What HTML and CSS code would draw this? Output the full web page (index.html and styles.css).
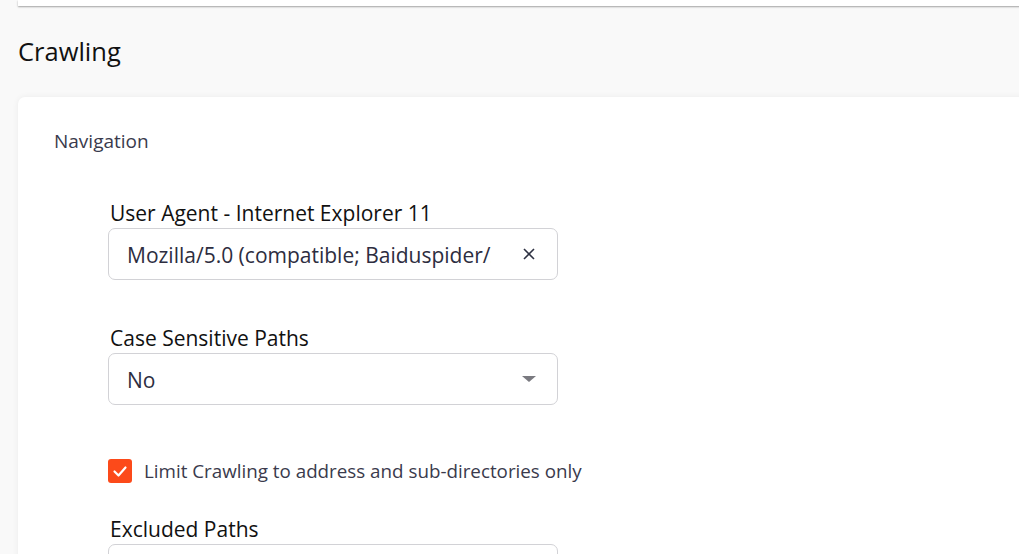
FILE: index.html
```html
<!DOCTYPE html>
<html lang="en">
<head>
<meta charset="utf-8">
<title>Crawling</title>
<link rel="stylesheet" href="styles.css">
</head>
<body>
<div class="page">
  <div class="topcard"></div>
  <h2 class="section-title">Crawling</h2>
  <div class="card">
    <div class="card-title">Navigation</div>
    <div class="fields">
      <div class="field">
        <label class="field-label">User Agent - Internet Explorer 11</label>
        <div class="input">
          <span class="input-text">Mozilla/5.0 (compatible; Baiduspider/2.0; +http://www.baidu.com/search/spider.html)</span>
          <svg class="clear" width="14" height="14" viewBox="0 0 14 14"><path d="M2 2L12 12M12 2L2 12" stroke="#2d3142" stroke-width="1.6" fill="none"/></svg>
        </div>
      </div>
      <div class="field field-2">
        <label class="field-label">Case Sensitive Paths</label>
        <div class="input">
          <span class="input-text">No</span>
          <svg class="caret" width="14" height="8" viewBox="0 0 14 8"><path d="M0 1H14L7 7Z" fill="#7a7a80"/></svg>
        </div>
      </div>
      <div class="check-row">
        <span class="checkbox"><svg width="24" height="24" viewBox="0 0 24 24"><path d="M6.5 12.5L10.5 16.5L17.5 8.5" stroke="#fff" stroke-width="2.2" fill="none" stroke-linecap="round" stroke-linejoin="round"/></svg></span>
        <span class="check-label">Limit Crawling to address and sub-directories only</span>
      </div>
      <div class="field field-3">
        <label class="field-label">Excluded Paths</label>
        <div class="input"></div>
      </div>
    </div>
  </div>
</div>
</body>
</html>
```
FILE: styles.css
```css
html, body {
  margin: 0;
  padding: 0;
  background: #f9f9f9;
  overflow: hidden;
  height: 100%;
}
body {
  font-family: "Open Sans", "Liberation Sans", sans-serif;
  color: #1a1a1a;
}
.page {
  padding-left: 18px;
}
.topcard {
  height: 6px;
  background: #fff;
  margin-right: -20px;
  box-shadow: 0 1px 2px rgba(0,0,0,0.35);
}
.section-title {
  margin: 0;
  padding-top: 30px;
  font-size: 25.5px;
  font-weight: 400;
  line-height: 30px;
  color: #111;
}
.card {
  margin-top: 31px;
  margin-right: -20px;
  background: #fff;
  border-radius: 7px 0 0 0;
  box-shadow: 0 0 6px rgba(0,0,0,0.06);
  padding: 32px 0 40px 36px;
  min-height: 600px;
}
.card-title {
  font-size: 19px;
  line-height: 24px;
  color: #3a3a4c;
}
.fields {
  display: flex;
  flex-direction: column;
  padding-left: 54px;
  padding-top: 47px;
  width: 450px;
}
.field-2 {
  margin-top: 45px;
}
.field-3 {
  margin-top: 33px;
}
.field-label {
  display: block;
  font-size: 21px;
  line-height: 26px;
  color: #111;
  padding-left: 2px;
  margin-bottom: 2px;
}
.input {
  display: flex;
  align-items: center;
  height: 50px;
  border: 1px solid #d2d2d6;
  border-radius: 7px;
  padding: 0 21px 0 18px;
}
.input-text {
  flex: 1;
  min-width: 0;
  overflow: hidden;
  white-space: nowrap;
  font-size: 21px;
  padding-top: 1px;
  color: #2d2d40;
}
.clear {
  margin-left: 31px;
  flex: none;
}
.caret {
  margin-left: 20px;
  flex: none;
}
.check-row {
  display: flex;
  align-items: center;
  margin-top: 54px;
  white-space: nowrap;
}
.checkbox {
  width: 24px;
  height: 24px;
  border-radius: 3px;
  background: #fc4a1a;
  display: inline-flex;
  flex: none;
}
.check-label {
  margin-left: 12px;
  font-size: 18.8px;
  line-height: 24px;
  color: #3a3a4c;
}
```
